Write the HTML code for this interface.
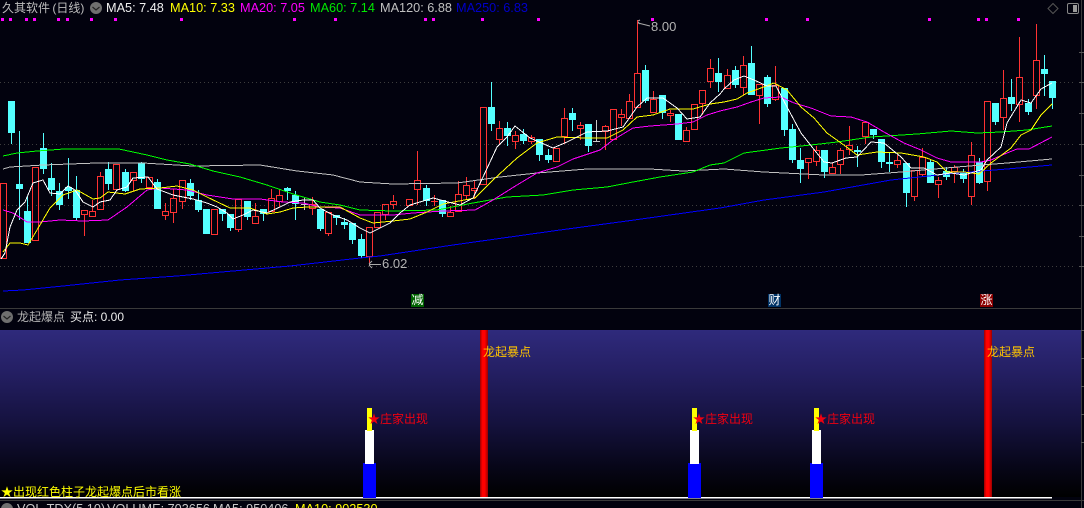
<!DOCTYPE html>
<html><head><meta charset="utf-8"><style>
html,body{margin:0;padding:0;background:#02020e}
#p{position:relative;width:1084px;height:508px;overflow:hidden;background:#02020e;font-family:"Liberation Sans","Noto Sans CJK SC",sans-serif;font-size:13px;line-height:16px}
#p span{position:absolute;white-space:nowrap}
svg{position:absolute;left:0;top:0}
.g{background:linear-gradient(90deg,#9a0000,#ff0000 30%,#ff0000 60%,#9a0000)}
#p div{position:absolute}
.z{color:#f00010;font-size:12px}
.l{color:#ffc400;font-size:12px}
.b{width:13px;height:13px;font-size:12px;line-height:13px;text-align:center;color:#fff}
</style></head><body><div id="p">
<div style="left:0;top:330px;width:1081px;height:167px;background:linear-gradient(180deg,#2f2a7c 0%,#241f63 25%,#15123f 55%,#070618 82%,#000 100%)"></div>
<svg width="1084" height="508" viewBox="0 0 1084 508" fill="none">
<g stroke="#3d3d3d" stroke-dasharray="1 3"><path d="M0 82.5H1076M0 144.5H1076M0 205.5H1076M0 266.5H1076"/></g>
<path stroke="#3a3a3a" d="M0 308.5H1081M0 500.5H1084M1081.5 0V508"/>
<path stroke="#555" d="M1079 52.5h5M1079 82.5h5M1079 113.5h5M1079 144.5h5M1079 175.5h5M1079 205.5h5M1079 236.5h5M1079 266.5h5M1081 330.5h3M1081 358.5h3M1081 386.5h3M1081 414.5h3M1081 442.5h3"/>
<path fill="#f0f" d="M1 18h3v3H1zM9 18h3v3H9zM25 18h3v3h-3zM33 18h3v3h-3zM57 18h3v3h-3zM66 18h3v3h-3zM90 18h3v3h-3zM114 18h3v3h-3zM180 18h3v3h-3zM293 18h3v3h-3zM334 18h3v3h-3zM424 18h3v3h-3zM432 18h3v3h-3zM481 18h3v3h-3zM537 18h3v3h-3zM651 18h3v3h-3zM765 18h3v3h-3zM806 18h3v3h-3zM928 18h3v3h-3zM977 18h3v3h-3zM985 18h3v3h-3zM1017 18h3v3h-3z"/>
<g shape-rendering="crispEdges">
<path fill="#54ffff" d="M8 101h7v32H8zM16 184h7v5h-7zM24 211h7v32h-7zM40 148h7v21h-7zM48 178h7v12h-7zM56 191h7v14h-7zM65 187h7v4h-7zM73 190h7v28h-7zM105 169h7v15h-7zM122 172h7v19h-7zM138 163h7v16h-7zM154 182h7v27h-7zM187 183h7v13h-7zM195 200h7v10h-7zM203 209h7v25h-7zM219 209h7v5h-7zM227 214h7v14h-7zM244 201h7v16h-7zM260 209h7v5h-7zM284 188h7v3h-7zM292 195h7v9h-7zM317 209h7v20h-7zM333 215h7v3h-7zM341 222h7v3h-7zM349 223h7v17h-7zM358 239h7v17h-7zM423 188h7v13h-7zM439 200h7v14h-7zM488 107h7v17h-7zM504 128h7v8h-7zM520 134h7v7h-7zM536 139h7v16h-7zM545 155h7v5h-7zM569 113h7v7h-7zM585 124h7v22h-7zM642 70h7v31h-7zM659 95h7v18h-7zM675 114h7v26h-7zM715 73h7v9h-7zM732 70h7v15h-7zM748 63h7v32h-7zM764 77h7v27h-7zM781 88h7v42h-7zM789 129h7v31h-7zM797 160h7v9h-7zM821 150h7v22h-7zM854 150h7v2h-7zM870 129h7v6h-7zM878 139h7v23h-7zM886 162h7v2h-7zM903 163h7v30h-7zM927 162h7v21h-7zM943 171h7v6h-7zM960 173h7v6h-7zM976 162h7v21h-7zM992 103h7v19h-7zM1008 97h7v7h-7zM1025 103h7v9h-7zM1041 69h7v5h-7zM1049 81h7v17h-7z"/>
<path stroke="#54ffff" d="M11.5 133V144M19.5 131V220M27.5 196V211M43.5 133V174M51.5 163V196M59.5 183V210M68.5 158V199M76.5 176V220M108.5 162V190M125.5 169V192M141.5 162V183M157.5 179V182M190.5 179V200M198.5 190V212M222.5 214V221M230.5 228V231M247.5 217V220M263.5 214V221M287.5 187V200M295.5 191V220M320.5 229V231M336.5 218V225M344.5 218V229M352.5 240V244M361.5 234V258M426.5 185V206M442.5 214V217M491.5 82V131M507.5 122V146M523.5 129V144M539.5 155V161M548.5 149V163M572.5 108V131M588.5 146V152M645.5 65V103M662.5 113V119M718.5 58V92M735.5 66V88M751.5 46V63M767.5 75V107M784.5 130V136M792.5 124V163M800.5 148V183M824.5 172V178M857.5 146V167M873.5 135V139M881.5 162V168M889.5 153V172M906.5 193V207M930.5 160V162M946.5 167V180M963.5 169V183M979.5 158V184M995.5 122V125M1011.5 79V111M1028.5 99V115M1044.5 55V96M1052.5 98V109"/>
<path stroke="#ff3232" d="M.5 183.5h6v75h-6zM32.5 167.5h6v73h-6zM81.5 210.5h6v4h-6zM84.5 215V236M89.5 211.5h6v5h-6zM92.5 200V211M97.5 176.5h6v33h-6zM100.5 172V176M113.5 164.5h6v25h-6zM130.5 172.5h6v8h-6zM133.5 181V191M146.5 177.5h6v10h-6zM162.5 211.5h6v4h-6zM165.5 203V211M165.5 216V220M170.5 198.5h6v14h-6zM173.5 189V198M173.5 213V223M179.5 180.5h6v21h-6zM182.5 202V209M211.5 209.5h6v25h-6zM235.5 199.5h6v30h-6zM238.5 230V232M252.5 216.5h6v7h-6zM255.5 203V216M268.5 198.5h6v13h-6zM271.5 189V198M276.5 195.5h6v6h-6zM279.5 190V195M279.5 202V207M309.5 204.5h6v4h-6zM312.5 197V204M312.5 209V215M325.5 212.5h6v21h-6zM328.5 234V236M366.5 227.5h6v29h-6zM369.5 257V266M374.5 212.5h6v15h-6zM382.5 204.5h6v10h-6zM385.5 215V220M390.5 201.5h6v3h-6zM393.5 195V201M393.5 205V209M406.5 199.5h6v6h-6zM414.5 180.5h6v9h-6zM417.5 151V180M417.5 190V205M431 201.5h7M434.5 195V206M447.5 212.5h6v4h-6zM450.5 206V212M455.5 194.5h6v17h-6zM458.5 181V194M463.5 185.5h6v10h-6zM466.5 177V185M466.5 196V199M471.5 188.5h6v2h-6zM474.5 180V188M474.5 191V199M480.5 107.5h6v77h-6zM496.5 128.5h6v11h-6zM499.5 121V128M499.5 140V145M512.5 135.5h6v6h-6zM515.5 131V135M515.5 142V149M528.5 137.5h6v4h-6zM531.5 135V137M531.5 142V144M553.5 148.5h6v13h-6zM561.5 118.5h6v18h-6zM564.5 108V118M564.5 137V144M577.5 125.5h6v3h-6zM580.5 122V125M580.5 129V140M602.5 126.5h6v5h-6zM605.5 125V126M605.5 132V150M610.5 109.5h6v30h-6zM618.5 114.5h6v3h-6zM621.5 109V114M621.5 118V126M626.5 101.5h6v17h-6zM629.5 94V101M634.5 73.5h6v34h-6zM637.5 20V73M650.5 99.5h6v13h-6zM653.5 91V99M667.5 113.5h6v2h-6zM670.5 110V113M670.5 116V122M683.5 130.5h6v11h-6zM686.5 127V130M691.5 104.5h6v25h-6zM699.5 90.5h6v13h-6zM702.5 104V115M707.5 68.5h6v13h-6zM710.5 59V68M710.5 82V88M724.5 75.5h6v13h-6zM727.5 69V75M740.5 65.5h6v22h-6zM743.5 56V65M743.5 88V95M756.5 84.5h6v11h-6zM759.5 96V124M772.5 85.5h6v14h-6zM775.5 66V85M775.5 100V101M805.5 158.5h6v4h-6zM808.5 163V179M813.5 150.5h6v11h-6zM816.5 146V150M816.5 162V166M829.5 167.5h6v6h-6zM832.5 163V167M837.5 150.5h6v14h-6zM840.5 148V150M840.5 165V174M846.5 145.5h6v4h-6zM849.5 126V145M849.5 150V155M862.5 122.5h6v14h-6zM865.5 137V144M894.5 160.5h6v4h-6zM897.5 155V160M897.5 165V168M911.5 170.5h6v26h-6zM914.5 197V201M919.5 157.5h6v17h-6zM922.5 148V157M922.5 175V176M935.5 180.5h6v4h-6zM938.5 177V180M938.5 185V198M951.5 167.5h6v4h-6zM954.5 165V167M954.5 172V183M968.5 155.5h6v41h-6zM971.5 142V155M971.5 197V205M984.5 101.5h6v80h-6zM987.5 182V191M1000.5 98.5h6v19h-6zM1003.5 70V98M1003.5 118V130M1016.5 77.5h6v27h-6zM1019.5 37V77M1019.5 105V122M1033.5 60.5h6v35h-6zM1036.5 24V60M1036.5 96V109"/>
<path stroke="#c8c8c8" d="M596.5 120V142M593 141.5h7M304.5 197V210M301 204.5h7"/>
</g>
<g stroke-width="1" stroke-linejoin="round" shape-rendering="crispEdges">
<polyline stroke="#0000ff" points="3,291 23,290 63,286 120,280 177,276 233,271 290,266 360,258 380,256 453,245 560,230 627,221 720,208 764,200 824,192 891,180 957,173 1007,169 1052,165"/>
<polyline stroke="#c0c0c0" points="3,169 10,167 43,165 97,163 143,163 193,166 260,165 297,171 333,175 360,182 393,184 457,183 500,177 537,173 587,169 650,169 683,171 724,169 764,172 824,175 861,175 901,172 957,167 1007,163 1052,159"/>
<polyline stroke="#00ff00" points="3,156 17,153 37,151 64,149 119,149 147,155 167,160 190,164 213,171 240,177 267,185 293,194 320,202 340,205 360,210 393,211 437,210 473,203 507,197 543,195 573,190 607,187 633,182 660,177 693,172 710,165 724,163 744,153 781,148 811,145 837,142 871,137 917,134 951,131 977,133 1001,132 1027,130 1052,126"/>
<polyline stroke="#ff00ff" points="3,210 13,213 27,222 40,222 60,220 83,221 108,220 127,207 147,190 160,188 187,190 207,195 233,199 260,199 283,202 303,203 320,207 340,208 360,215 393,215 413,213 443,211 475,210 493,200 517,185 537,173 557,167 573,159 600,150 613,140 633,128 650,126 677,124 693,122 707,115 720,111 737,107 751,102 764,98 781,97 794,103 811,108 831,116 851,117 867,122 884,132 904,143 921,150 937,158 951,162 981,162 991,160 1007,153 1017,149 1029,149 1052,137"/>
<polyline stroke="#ffff00" points="3,252 10,243 20,243 28,245 37,230 50,208 63,195 77,190 93,199 100,198 108,192 125,194 140,189 160,188 177,186 193,190 207,197 230,208 250,208 267,214 280,212 293,208 307,207 340,207 360,218 373,223 393,221 410,219 427,212 443,204 475,198 493,180 517,158 537,143 557,137 587,138 607,138 623,130 637,117 653,115 670,109 693,109 710,104 724,102 737,99 747,93 761,88 774,83 787,90 801,107 814,118 827,133 848,148 857,155 877,152 901,153 924,157 937,162 947,172 964,172 979,174 991,163 1011,148 1021,135 1031,130 1041,115 1052,104"/>
<polyline stroke="#ffffff" points="1,259 5,253 10,227 17,210 25,202 33,183 43,180 50,193 60,194 68,186 75,190 83,202 93,207 100,202 110,200 117,190 127,187 133,178 148,177 157,189 173,195 193,199 207,203 217,207 227,213 233,219 243,215 253,210 267,213 280,207 290,202 303,200 313,200 320,208 333,215 347,220 360,228 370,233 380,228 390,223 400,213 410,205 420,202 433,198 448,202 460,205 473,198 483,177 497,147 507,137 515,126 530,138 553,148 567,142 587,132 607,131 623,127 637,107 647,98 663,98 677,108 687,119 700,117 710,103 720,94 724,89 734,80 744,76 754,80 767,86 776,86 787,107 801,133 812,147 824,162 832,163 846,158 857,157 871,142 884,143 901,157 911,168 924,168 937,175 951,173 964,175 981,170 987,160 1001,147 1007,123 1021,100 1031,103 1041,89 1052,83"/>
</g>
<path stroke="#aaa" d="M638 23L650 26M638 21l2-1M638 22l2 2M369 264.5H381M369 264l3-3M369 265l3 3"/>
<g fill="#6f6f6f"><circle cx="96" cy="8" r="6"/><circle cx="7" cy="317" r="6"/><circle cx="7" cy="509" r="6"/></g>
<path stroke="#222" stroke-width="1.2" d="M92.5 7l3.5 3 3.500-3M3.500 316l3.500 3 3.500-3"/>
<path stroke="#555" d="M1053 3.500l5 5-5 5-5-5z"/>
<rect x="1067.500" y="3.500" width="11" height="10" rx="1.500" stroke="#888"/><rect x="1073" y="5" width="4" height="7" fill="#999"/>
<rect x="0" y="497" width="1052" height="1.500" fill="#fff"/>
</svg>
<div class="g" style="left:480px;top:330px;width:8px;height:167px"></div>
<div class="g" style="left:984px;top:330px;width:8px;height:167px"></div>
<div style="left:363px;top:463px;width:13px;height:35px;background:#00f"></div><div style="left:365px;top:430px;width:9px;height:34px;background:#fff"></div><div style="left:367px;top:408px;width:5px;height:23px;background:#ff0"></div>
<div style="left:688px;top:463px;width:13px;height:35px;background:#00f"></div><div style="left:690px;top:430px;width:9px;height:34px;background:#fff"></div><div style="left:692px;top:408px;width:5px;height:23px;background:#ff0"></div>
<div style="left:810px;top:463px;width:13px;height:35px;background:#00f"></div><div style="left:812px;top:430px;width:9px;height:34px;background:#fff"></div><div style="left:814px;top:408px;width:5px;height:23px;background:#ff0"></div>
<span style="left:2px;top:0;color:#bdbdbd;font-size:12px;word-spacing:-1px">久其软件 (日线)</span>
<span style="left:106px;top:0;color:#f0f0f0;font-size:12.7px">MA5: 7.48</span>
<span style="left:170px;top:0;color:#ffff00;font-size:12.7px">MA10: 7.33</span>
<span style="left:240px;top:0;color:#ff00ff;font-size:12.7px">MA20: 7.05</span>
<span style="left:310px;top:0;color:#00e800;font-size:12.7px">MA60: 7.14</span>
<span style="left:380px;top:0;color:#c0c0c0;font-size:12.7px">MA120: 6.88</span>
<span style="left:456px;top:0;color:#0000c8;font-size:12.7px">MA250: 6.83</span>
<span style="left:651px;top:19px;color:#b4b4b4">8.00</span>
<span style="left:382px;top:256px;color:#b4b4b4">6.02</span>
<div class="b" style="left:411px;top:294px;background:#006400">减</div>
<div class="b" style="left:768px;top:294px;background:#003366">财</div>
<div class="b" style="left:980px;top:294px;background:#8b0000">涨</div>
<span style="left:17px;top:309px;color:#b4b4b4;font-size:12px">龙起爆点</span>
<span style="left:70px;top:309px;color:#ececec;font-size:12px">买点: 0.00</span>
<span class="l" style="left:483px;top:344px">龙起暴点</span>
<span class="l" style="left:987px;top:344px">龙起暴点</span>
<span class="z" style="left:368px;top:411px">★庄家出现</span>
<span class="z" style="left:693px;top:411px">★庄家出现</span>
<span class="z" style="left:815px;top:411px">★庄家出现</span>
<span style="left:1px;top:484px;color:#ffff00;font-size:12px">★出现红色柱子龙起爆点后市看涨</span>
<span style="left:17px;top:501px;color:#c8c8c8;font-size:12.7px">VOL-TDX(5,10)</span>
<span style="left:107px;top:501px;color:#c8c8c8;font-size:12.7px">VOLUME: 703656</span>
<span style="left:213px;top:501px;color:#c8c8c8;font-size:12.7px">MA5: 950406</span>
<span style="left:295px;top:501px;color:#ffff00;font-size:12.7px">MA10: 902530</span>
</div></body></html>
